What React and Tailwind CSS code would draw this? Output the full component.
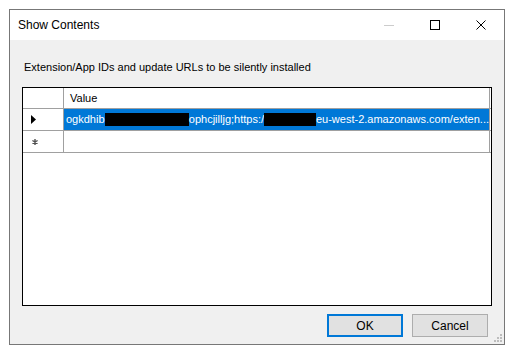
import React from "react";

const font = { fontFamily: '"Liberation Sans", Arial, sans-serif' };

const TitleBar = () => (
  <div className="h-[30px] bg-white flex items-center shrink-0">
    <span className="pl-[8px] text-[12px] text-black">Show Contents</span>
    <div className="ml-auto flex items-center h-full">
      {/* minimize (disabled) */}
      <div className="w-[46px] h-full flex items-center justify-center">
        <div className="w-[10px] h-px bg-[#cccccc]" />
      </div>
      {/* maximize */}
      <div className="w-[46px] h-full flex items-center justify-center">
        <div className="w-[10px] h-[10px] border border-black" />
      </div>
      {/* close */}
      <div className="w-[46px] h-full flex items-center justify-center">
        <svg width="10" height="10" viewBox="0 0 10 10">
          <path d="M0.5 0.5 L9.5 9.5 M9.5 0.5 L0.5 9.5" stroke="#000" strokeWidth="1" />
        </svg>
      </div>
    </div>
  </div>
);

const Grip = () => (
  <svg width="8" height="8" viewBox="0 0 8 8" className="absolute right-[2px] bottom-[2px]">
    <rect x="6" y="0" width="2" height="2" fill="#bdbdbd" />
    <rect x="3" y="3" width="2" height="2" fill="#bdbdbd" />
    <rect x="6" y="3" width="2" height="2" fill="#bdbdbd" />
    <rect x="0" y="6" width="2" height="2" fill="#bdbdbd" />
    <rect x="3" y="6" width="2" height="2" fill="#bdbdbd" />
    <rect x="6" y="6" width="2" height="2" fill="#bdbdbd" />
  </svg>
);

const Grid = () => (
  <div className="ml-[12px] w-[470px] h-[219px] border border-black bg-white text-[11px]">
    {/* header */}
    <div className="flex h-[21px] border-b border-[#a0a0a0]">
      <div className="w-[41px] border-r border-[#a0a0a0]" />
      <div className="w-[426px] border-r border-[#a0a0a0] pl-[6px] flex items-center text-black">
        Value
      </div>
    </div>
    {/* selected row */}
    <div className="flex h-[22px] border-b border-[#a0a0a0]">
      <div className="w-[41px] border-r border-[#a0a0a0] flex items-center pl-[8px]">
        <svg width="5" height="9" viewBox="0 0 5 9">
          <path d="M0 0 L5 4.5 L0 9 Z" fill="#000" />
        </svg>
      </div>
      <div className="w-[426px] border-r border-[#a0a0a0] bg-[#0078d7] text-white flex items-center pl-[2px] whitespace-nowrap overflow-hidden">
        <span>ogkdhib</span>
        <span className="inline-block w-[86px] h-[13px] bg-black" />
        <span>ophcjilljg;https:/</span>
        <span className="inline-block w-[53px] h-[13px] bg-black" />
        <span>eu-west-2.amazonaws.com/exten...</span>
      </div>
    </div>
    {/* new row */}
    <div className="flex h-[22px] border-b border-[#a0a0a0]">
      <div className="w-[41px] border-r border-[#a0a0a0] flex items-center pl-[9px]">
        <svg width="6" height="6" viewBox="0 0 6 6">
          <path d="M3 0 V6 M0.4 1.5 L5.6 4.5 M5.6 1.5 L0.4 4.5" stroke="#505050" strokeWidth="1.4" />
        </svg>
      </div>
      <div className="w-[426px] border-r border-[#a0a0a0]" />
    </div>
  </div>
);

export default function App() {
  return (
    <div className="w-[516px] h-[355px] bg-white pt-[9px] pl-[9px]" style={font}>
      <div className="w-[496px] h-[336px] border border-[#777777] flex flex-col">
        <TitleBar />
        <div className="relative flex-1 bg-[#f0f0f0] flex flex-col">
          <div className="pt-[19px] pl-[14px] text-[11px] leading-[16px] text-black">
            Extension/App IDs and update URLs to be silently installed
          </div>
          <div className="mt-[12px]">
            <Grid />
          </div>
          <div className="mt-[8px] flex justify-end gap-[9px] pr-[16px]">
            <button className="w-[76px] h-[23px] bg-[#e1e1e1] border-2 border-[#0078d7] text-[12px] text-black">
              OK
            </button>
            <button className="w-[76px] h-[23px] bg-[#e1e1e1] border border-[#adadad] text-[12px] text-black">
              Cancel
            </button>
          </div>
          <Grip />
        </div>
      </div>
    </div>
  );
}
